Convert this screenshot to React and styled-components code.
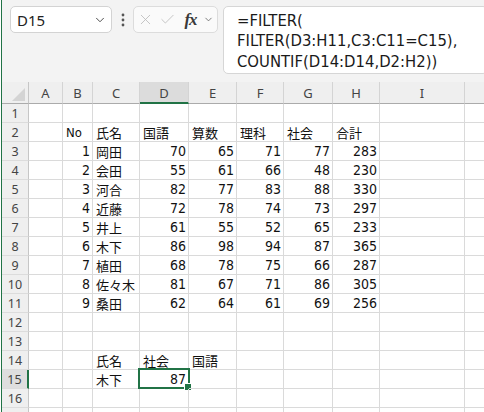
import React from "react";
import styled, { createGlobalStyle } from "styled-components";
import { ChevronDown, X, Check } from "lucide-react";

const GREEN = "#217346";

const GlobalStyle = createGlobalStyle`
  html, body {
    margin: 0;
    padding: 0;
    background: #fff;
  }
  body {
    width: 484px;
    height: 412px;
    overflow: hidden;
    font-family: "Noto Sans", sans-serif;
  }
`;

const Frame = styled.div`
  width: 482px;
  height: 412px;
  margin-left: 1px;
  border-left: 1px solid ${GREEN};
  display: flex;
  flex-direction: column;
  overflow: hidden;
`;

const TopBar = styled.div`
  height: 82px;
  flex: none;
  box-sizing: border-box;
  background: #f3f3f3;
  display: flex;
  align-items: flex-start;
  padding: 6px 0 0 8px;
`;

const NameBox = styled.div`
  width: 102px;
  height: 27px;
  box-sizing: border-box;
  flex: none;
  display: flex;
  align-items: center;
  justify-content: space-between;
  padding: 0 4px 0 6px;
  background: #fff;
  border: 1px solid #d3d3d3;
  border-radius: 5px;
  font-size: 15px;
  color: #222;
`;

const Dots = styled.div`
  width: 21px;
  height: 27px;
  flex: none;
  display: flex;
  align-items: center;
  justify-content: center;
  color: #555;
`;

const FuncBox = styled.div`
  width: 85px;
  height: 27px;
  box-sizing: border-box;
  flex: none;
  display: flex;
  align-items: center;
  background: #fafafa;
  border: 1px solid #dcdcdc;
  border-radius: 5px;
`;

const FuncBtn = styled.div`
  width: ${(p) => p.$w}px;
  height: 100%;
  display: flex;
  align-items: center;
  justify-content: center;
  color: ${(p) => p.$color || "#bcbcbc"};
`;

const Fx = styled.span`
  font-family: "Liberation Serif", "DejaVu Serif", serif;
  font-style: italic;
  font-weight: bold;
  font-size: 17px;
  letter-spacing: -1px;
  color: #3a3a3a;
  line-height: 1;
`;

const FormulaBox = styled.div`
  flex: 1;
  height: 68px;
  box-sizing: border-box;
  margin: 0 -4px 0 5px;
  padding: 3.5px 0 0 13px;
  background: #fff;
  border: 1px solid #d6d6d6;
  border-radius: 5px;
  font-family: "DejaVu Sans Condensed", "DejaVu Sans", sans-serif;
  font-stretch: condensed;
  font-size: 16.5px;
  line-height: 20.5px;
  color: #1a1a1a;
  white-space: pre;
`;

const Sheet = styled.div`
  display: grid;
  grid-template-columns: 27px 34px 30px 47px 49px 48px 47px 49px 47px 85px 85px;
  grid-template-rows: 22px repeat(17, 19px);
`;

const Corner = styled.div`
  box-sizing: border-box;
  background: #efefef;
  border-right: 1px solid #c6c6c6;
  border-bottom: 1px solid #ababab;
  display: flex;
  align-items: flex-end;
  justify-content: flex-end;
  padding: 0 3px 2px 0;
`;

const ColHead = styled.div`
  box-sizing: border-box;
  background: ${(p) => (p.$selected ? "#dcdcdc" : "#efefef")};
  border-right: 1px solid #d4d4d4;
  border-bottom: ${(p) => (p.$selected ? `2px solid ${GREEN}` : "1px solid #ababab")};
  display: flex;
  align-items: center;
  justify-content: center;
  font-size: 13px;
  color: #444;
  padding-top: ${(p) => (p.$selected ? 1 : 0)}px;
`;

const RowHead = styled.div`
  box-sizing: border-box;
  background: ${(p) => (p.$selected ? "#dedede" : "#efefef")};
  border-right: ${(p) => (p.$selected ? `2px solid ${GREEN}` : "1px solid #c6c6c6")};
  border-bottom: 1px solid #dcdcdc;
  display: flex;
  align-items: center;
  justify-content: center;
  font-size: 12.5px;
  color: #444;
`;

const Cell = styled.div`
  position: relative;
  box-sizing: border-box;
  border-right: 1px solid #dadada;
  border-bottom: 1px solid #dadada;
  display: flex;
  align-items: center;
  justify-content: ${(p) => (p.$num ? "flex-end" : "flex-start")};
  padding: 0 2px 0 3px;
  white-space: nowrap;
  font-family: "DejaVu Sans Condensed", "DejaVu Sans", "Noto Sans CJK JP", sans-serif;
  font-stretch: condensed;
  font-size: ${(p) => (p.$num ? 14 : 13)}px;
  color: #111;
`;

const Selection = styled.div`
  position: absolute;
  left: -2px;
  top: -2px;
  width: 52px;
  height: 21px;
  box-sizing: border-box;
  border: 2px solid ${GREEN};
  pointer-events: none;
`;

const Handle = styled.div`
  position: absolute;
  right: -4px;
  bottom: -4px;
  width: 6px;
  height: 6px;
  background: ${GREEN};
  border: 1px solid #fff;
`;

// the J column sits past the window edge, so its letter is never seen
const cols = ["A", "B", "C", "D", "E", "F", "G", "H", "I", ""];

const scores = [
  [1, "岡田", 70, 65, 71, 77, 283],
  [2, "会田", 55, 61, 66, 48, 230],
  [3, "河合", 82, 77, 83, 88, 330],
  [4, "近藤", 72, 78, 74, 73, 297],
  [5, "井上", 61, 55, 52, 65, 233],
  [6, "木下", 86, 98, 94, 87, 365],
  [7, "植田", 68, 78, 75, 66, 287],
  [8, "佐々木", 81, 67, 71, 86, 305],
  [9, "桑田", 62, 64, 61, 69, 256],
];

const pad = (vals) => [...vals, ...Array(10 - vals.length).fill("")];

const rows = [
  pad([]),
  pad(["", "No", "氏名", "国語", "算数", "理科", "社会", "合計"]),
  ...scores.map((r) => pad(["", ...r])),
  pad([]),
  pad([]),
  pad(["", "", "氏名", "社会", "国語"]),
  pad(["", "", "木下", 87]),
  pad([]),
  pad([]),
];

export default function App() {
  return (
    <>
      <GlobalStyle />
      <Frame>
        <TopBar>
          <NameBox>
            <span>D15</span>
            <ChevronDown size={14} strokeWidth={1.6} color="#444" />
          </NameBox>
          <Dots>
            <svg width="4" height="14" viewBox="0 0 4 14">
              <circle cx="2" cy="2" r="1.4" fill="currentColor" />
              <circle cx="2" cy="7" r="1.4" fill="currentColor" />
              <circle cx="2" cy="12" r="1.4" fill="currentColor" />
            </svg>
          </Dots>
          <FuncBox>
            <FuncBtn $w={22}>
              <X size={17} strokeWidth={1.2} />
            </FuncBtn>
            <FuncBtn $w={22}>
              <Check size={17} strokeWidth={1.2} />
            </FuncBtn>
            <FuncBtn $w={25}>
              <Fx>fx</Fx>
            </FuncBtn>
            <FuncBtn $w={11} $color="#555">
              <ChevronDown size={11} strokeWidth={1.6} />
            </FuncBtn>
          </FuncBox>
          <FormulaBox>
            <div>=FILTER(</div>
            <div>FILTER(D3:H11,C3:C11=C15),</div>
            <div>COUNTIF(D14:D14,D2:H2))</div>
          </FormulaBox>
        </TopBar>
        <Sheet>
          <Corner>
            <svg width="13" height="13" viewBox="0 0 13 13">
              <polygon points="13,0 13,13 0,13" fill="#d4d4d4" />
            </svg>
          </Corner>
          {cols.map((c, j) => (
            <ColHead key={j} $selected={c === "D"}>
              {c}
            </ColHead>
          ))}
          {rows.map((row, i) => (
            <React.Fragment key={i}>
              <RowHead $selected={i === 14}>{i < 16 ? i + 1 : ""}</RowHead>
              {row.map((v, j) => (
                <Cell key={j} $num={typeof v === "number"}>
                  {v}
                  {i === 14 && j === 3 && (
                    <Selection>
                      <Handle />
                    </Selection>
                  )}
                </Cell>
              ))}
            </React.Fragment>
          ))}
        </Sheet>
      </Frame>
    </>
  );
}
